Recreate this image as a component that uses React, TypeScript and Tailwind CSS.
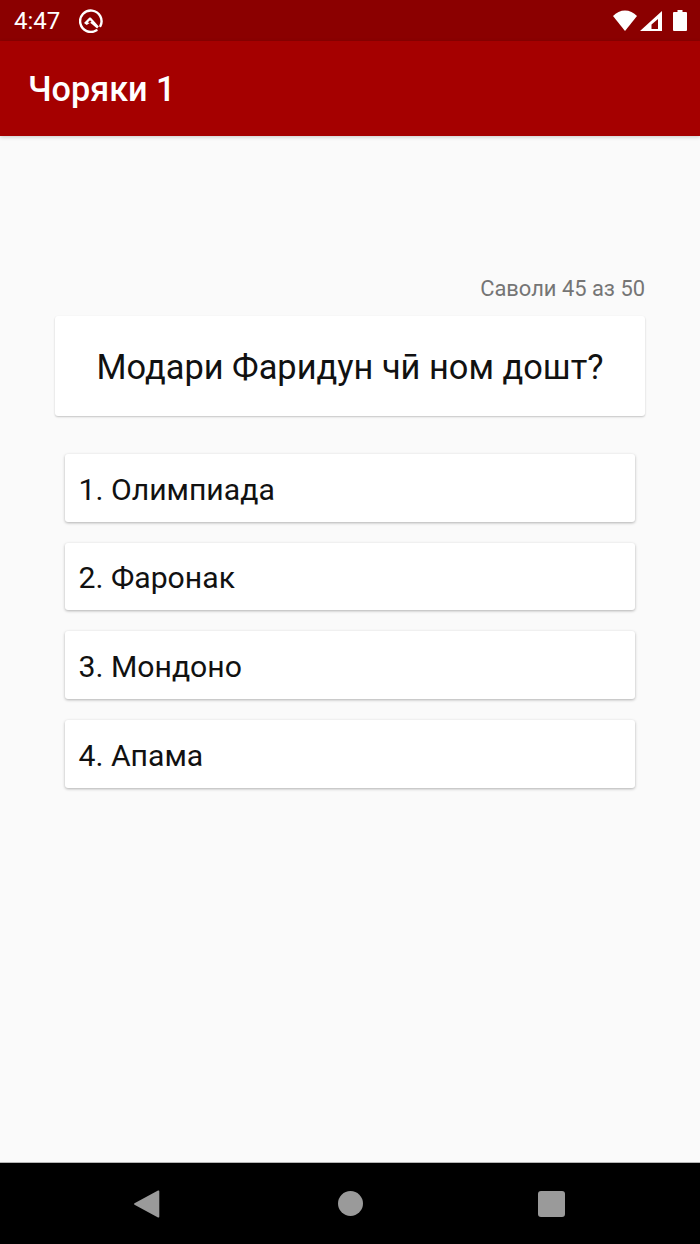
import React from 'react';

const answers = ['1. Олимпиада', '2. Фаронак', '3. Мондоно', '4. Апама'];

function StatusBar() {
    return (
        <div className="flex h-[41px] items-center justify-between bg-[#8b0000] pl-[14px] pr-[13px] text-white">
            <div className="flex items-center gap-[19px]">
                <span className="text-[24px] leading-none">4:47</span>
                <svg width="24" height="24" viewBox="0 0 24 24" fill="none">
                    <path d="M17.500 21.300A10.700 10.700 0 1 1 21.400 17" stroke="white" strokeWidth="2.400" strokeLinecap="round" />
                    <path d="M5 14 10.200 8.800c.5-.5 1.200-.5 1.700 0L14 11l5.800 6.600-1.700 1.900-5.300-4.500-1.700-1.300L7.700 16z" fill="white" />
                    <path d="M8.700 13.500 11 11.300l1.500 1.400-1.700 1.300z" fill="#8b0000" />
                </svg>
            </div>
            <div className="flex items-center">
                <svg width="24" height="21" viewBox="0 0 24 21">
                    <path d="M0 6C6.500 -1.500 17.500 -1.500 24 6L12 21z" fill="white" />
                </svg>
                <svg className="ml-[3px]" width="22" height="20" viewBox="0 0 22 20">
                    <path fillRule="evenodd" d="M22 0V20H0zM18 8 11.500 13.500V18H18z" fill="white" />
                </svg>
                <svg className="ml-[11px]" width="14" height="21" viewBox="0 0 14 21">
                    <path d="M4.500 0h5v2H13a1 1 0 0 1 1 1v17a1 1 0 0 1-1 1H1a1 1 0 0 1-1-1V3a1 1 0 0 1 1-1h3.500z" fill="white" />
                </svg>
            </div>
        </div>
    );
}

function NavBar() {
    return (
        <div className="relative h-[82px] border-t border-[#b5b5b5] bg-black">
            <svg className="absolute left-[133px] top-[26px]" width="27" height="30" viewBox="0 0 27 30">
                <path d="M25 1.500a1 1 0 0 1 1.300 1V27.500a1 1 0 0 1-1.300 1L1.500 15.800a1 1 0 0 1 0-1.600z" fill="#9a9a9a" />
            </svg>
            <div className="absolute left-[338px] top-[28px] h-[25px] w-[25px] rounded-full bg-[#9a9a9a]" />
            <div className="absolute left-[538px] top-[28px] h-[26px] w-[27px] rounded-[3px] bg-[#9a9a9a]" />
        </div>
    );
}

export default function App() {
    return (
        <div className="flex h-[1244px] w-[700px] flex-col overflow-hidden bg-[#fafafa] font-['Roboto',sans-serif]">
            <StatusBar />
            <div className="z-10 flex h-[95px] items-center bg-[#a50000] pl-[28px] pt-[3px] shadow-[0_1px_4px_rgba(0,0,0,0.2)]">
                <h1 className="text-[34.200px] font-medium text-white">Чоряки 1</h1>
            </div>

            <div className="flex flex-1 flex-col px-[55px] pt-[137px]">
                <p className="pt-[1px] text-right text-[21.900px] leading-[30px] text-[#757575]">Саволи 45 аз 50</p>
                <div className="mt-[12px] flex h-[100px] items-center justify-center rounded-[3px] bg-white pt-[4px] shadow-[0_1px_2px_rgba(0,0,0,0.22)]">
                    <span className="text-[34.400px] text-[#111111]">Модари Фаридун чӣ ном дошт?</span>
                </div>
                <div className="mt-[38px] flex flex-col gap-[21px] px-[10px]">
                    {answers.map((answer) => (
                        <div
                            key={answer}
                            className="flex h-[67.670px] items-center rounded-[3px] bg-white pl-[13.500px] pt-[3px] shadow-[0_1px_3px_rgba(0,0,0,0.3)]"
                        >
                            <span className="text-[30.200px] text-[#111111]">{answer}</span>
                        </div>
                    ))}
                </div>
            </div>

            <NavBar />
        </div>
    );
}
